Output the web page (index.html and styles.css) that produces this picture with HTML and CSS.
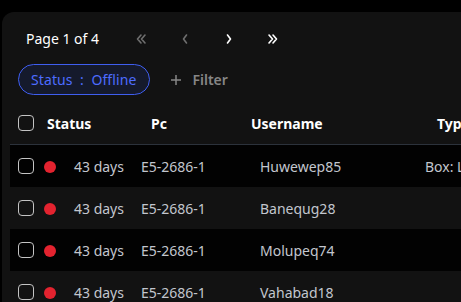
FILE: index.html
```html
<!DOCTYPE html>
<html lang="en">
<head>
    <meta charset="UTF-8">
    <meta name="viewport" content="width=device-width, initial-scale=1.0">
    <title>Machines</title>
    <link rel="stylesheet" href="styles.css">
</head>
<body>
    <div class="panel">
        <div class="pager">
            <span class="page-label">Page 1 of 4</span>
            <div class="pager-buttons">
                <button class="pg disabled" aria-label="First page">
                    <svg width="16" height="16" viewBox="0 0 16 16"><path d="M8 4 L4.5 8 L8 12 M12 4 L8.5 8 L12 12"/></svg>
                </button>
                <button class="pg disabled" aria-label="Previous page">
                    <svg width="16" height="16" viewBox="0 0 16 16"><path d="M9.5 4 L6.5 8 L9.5 12"/></svg>
                </button>
                <button class="pg" aria-label="Next page">
                    <svg width="16" height="16" viewBox="0 0 16 16"><path d="M6.5 4 L9.5 8 L6.5 12"/></svg>
                </button>
                <button class="pg" aria-label="Last page">
                    <svg width="16" height="16" viewBox="0 0 16 16"><path d="M4 4 L7.5 8 L4 12 M8 4 L11.5 8 L8 12"/></svg>
                </button>
            </div>
        </div>

        <div class="filters">
            <span class="chip">Status &nbsp;:&nbsp; Offline</span>
            <button class="add-filter">
                <svg width="12" height="12" viewBox="0 0 12 12"><path d="M6 1 V11 M1 6 H11"/></svg>
                Filter
            </button>
        </div>

        <div class="table">
            <div class="row head">
                <div class="cell"><span class="check"></span></div>
                <div class="cell h-status">Status</div>
                <div class="cell h-pc">Pc</div>
                <div class="cell h-user">Username</div>
                <div class="cell h-type">Type</div>
            </div>
            <div class="row dark">
                <div class="cell"><span class="check"></span></div>
                <div class="cell status"><span class="dot"></span>43 days</div>
                <div class="cell">E5-2686-1</div>
                <div class="cell user">Huwewep85</div>
                <div class="cell">Box: Linux</div>
            </div>
            <div class="row">
                <div class="cell"><span class="check"></span></div>
                <div class="cell status"><span class="dot"></span>43 days</div>
                <div class="cell">E5-2686-1</div>
                <div class="cell user">Banequg28</div>
                <div class="cell"></div>
            </div>
            <div class="row dark">
                <div class="cell"><span class="check"></span></div>
                <div class="cell status"><span class="dot"></span>43 days</div>
                <div class="cell">E5-2686-1</div>
                <div class="cell user">Molupeq74</div>
                <div class="cell"></div>
            </div>
            <div class="row">
                <div class="cell"><span class="check"></span></div>
                <div class="cell status"><span class="dot"></span>43 days</div>
                <div class="cell">E5-2686-1</div>
                <div class="cell user">Vahabad18</div>
                <div class="cell"></div>
            </div>
        </div>
    </div>
</body>
</html>
```

FILE: styles.css
```css
body {
    margin: 0;
    background: #000;
    font-family: "Noto Sans", "Open Sans", sans-serif;
    font-size: 14px;
    color: #fff;
    overflow: hidden;
    height: 302px;
}

.panel {
    margin: 12px 0 0 2px;
    width: 560px;
    height: 400px;
    background: #121212;
    border-radius: 12px 0 0 0;
}

/* Pager */
.pager {
    display: flex;
    align-items: center;
    padding: 17px 0 0 24px;
    height: 19px;
}

.page-label {
    width: 99px;
}

.pager-buttons {
    display: flex;
    gap: 12px;
}

.pg {
    width: 32px;
    height: 24px;
    padding: 0;
    border: none;
    background: none;
    display: flex;
    align-items: center;
    justify-content: center;
    cursor: pointer;
}

.pg svg path {
    fill: none;
    stroke: #fff;
    stroke-width: 1.6;
    stroke-linecap: round;
    stroke-linejoin: round;
}

.pg.disabled svg path {
    stroke: #6f6f6f;
}

/* Filters */
.filters {
    display: flex;
    align-items: center;
    gap: 20px;
    padding: 16px 0 0 16px;
}

.chip {
    height: 29px;
    line-height: 29px;
    padding: 0 13px 0 12px;
    border: 1px solid #3f5ef0;
    border-radius: 16px;
    background: #151a2c;
    color: #4d6cff;
    letter-spacing: 0.1px;
}

.add-filter {
    display: flex;
    align-items: center;
    gap: 10px;
    border: none;
    background: none;
    padding: 0;
    font: inherit;
    font-weight: 600;
    color: #868686;
    cursor: pointer;
}

.add-filter svg path {
    stroke: #868686;
    stroke-width: 1.5;
}

/* Table */
.table {
    margin: 7px 0 0 8px;
}

.row {
    display: grid;
    grid-template-columns: 34px 97px 110px 174px 1fr;
    align-items: center;
    height: 42px;
    color: #c2c6ce;
}

.row.head {
    color: #fff;
    font-weight: 700;
    border-bottom: 1px solid #2c323b;
}

.row.dark {
    background: #020202;
}

.cell {
    display: flex;
    align-items: center;
    white-space: nowrap;
}

.check {
    width: 14px;
    height: 14px;
    margin-left: 8px;
    border: 1px solid #c4c4c4;
    border-radius: 4px;
}

.h-status { padding-left: 3px; }
.h-pc { padding-left: 10px; }
.h-type { padding-left: 12px; }

.user { padding-left: 9px; }

.dot {
    width: 12px;
    height: 12px;
    border-radius: 50%;
    background: #e3232f;
    margin: 2px 18px 0 0;
}
```
